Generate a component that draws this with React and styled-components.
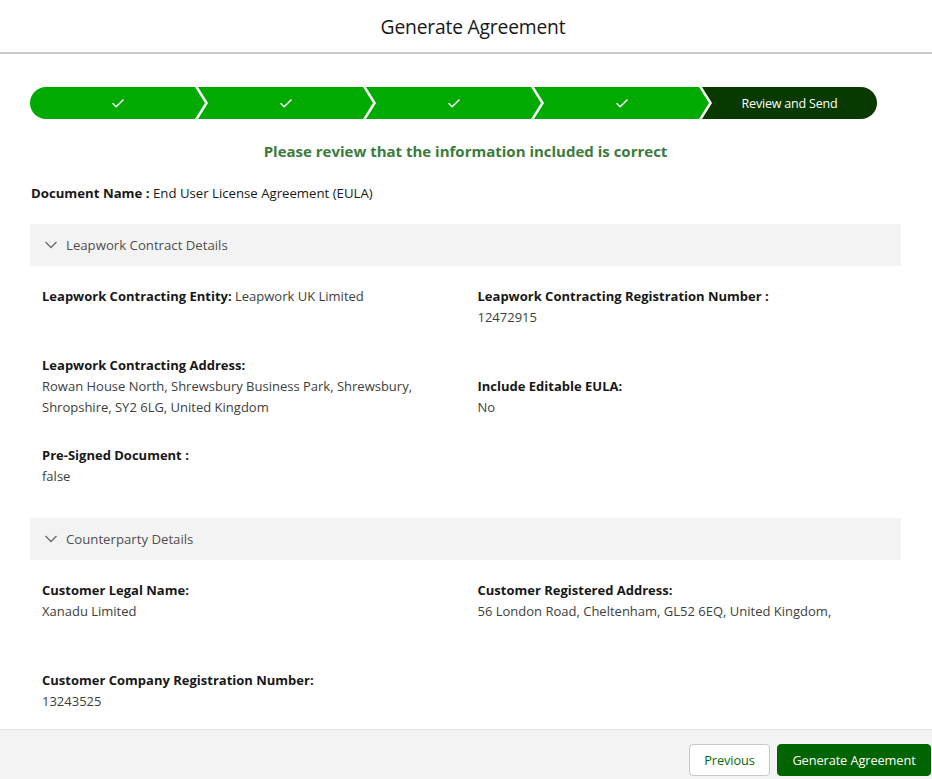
import React from "react";
import styled, { createGlobalStyle } from "styled-components";

const GlobalStyle = createGlobalStyle`
    html, body {
        margin: 0;
        padding: 0;
        background: #ffffff;
    }
    body {
        font-family: "Open Sans", "Noto Sans", Arial, sans-serif;
        color: #181818;
    }
    * {
        box-sizing: border-box;
    }
`;

const Page = styled.div`
    width: 932px;
    height: 779px;
    display: flex;
    flex-direction: column;
    overflow: hidden;
    background: #ffffff;
`;

const Header = styled.div`
    height: 54px;
    flex-shrink: 0;
    display: flex;
    align-items: center;
    justify-content: center;
    padding-left: 14px;
    border-bottom: 2px solid #c9c9c9;
    h1 {
        margin: 0;
        font-size: 19.3px;
        font-weight: 400;
        color: #181818;
        letter-spacing: -0.2px;
    }
`;

const Body = styled.div`
    flex: 1;
    overflow: hidden;
    padding: 33px 31px 0 30px;
`;

const Steps = styled.div`
    display: flex;
    height: 32px;
    width: 847px;
`;

const Step = styled.div`
    flex: 1;
    display: flex;
    align-items: center;
    justify-content: center;
    margin-left: ${(p) => (p.$first ? "0" : "-7px")};
    background: ${(p) => (p.$current ? "#083a00" : "#00aa00")};
    color: #ffffff;
    font-size: 12.5px;
    letter-spacing: -0.2px;
    border-radius: ${(p) => (p.$first ? "16px 0 0 16px" : p.$last ? "0 16px 16px 0" : "0")};
    clip-path: ${(p) =>
        p.$first
            ? "polygon(0 0, calc(100% - 10px) 0, 100% 50%, calc(100% - 10px) 100%, 0 100%)"
            : p.$last
            ? "polygon(0 0, 100% 0, 100% 100%, 0 100%, 10px 50%)"
            : "polygon(0 0, calc(100% - 10px) 0, 100% 50%, calc(100% - 10px) 100%, 0 100%, 10px 50%)"};
    svg {
        width: 14px;
        height: 14px;
    }
`;

const Notice = styled.div`
    margin: 22px 0 0;
    text-align: center;
    font-size: 15px;
    font-weight: 700;
    color: #3b7b3b;
`;

const DocLine = styled.div`
    margin-top: 22px;
    margin-left: 1px;
    font-size: 13.2px;
    line-height: 21px;
    color: #181818;
    b {
        font-weight: 700;
    }
`;

const SectionHead = styled.div`
    margin-top: ${(p) => (p.$first ? "20px" : "0")};
    height: 42px;
    background: #f3f3f3;
    display: flex;
    align-items: center;
    padding-left: 14px;
    gap: 8px;
    font-size: 13.2px;
    color: #514f4d;
    svg {
        width: 14px;
        height: 14px;
    }
`;

const FieldGrid = styled.div`
    display: grid;
    grid-template-columns: 1fr 1fr;
    row-gap: 27px;
    padding: 20px 0 ${(p) => p.$bottom || 31}px;
`;

const Field = styled.div`
    padding: 0 12px;
    font-size: 13px;
    line-height: 21px;
    color: #3e3e3c;
    align-self: ${(p) => (p.$bottom ? "end" : "start")};
    min-height: ${(p) => (p.$lines ? p.$lines * 21 : 0)}px;
    b {
        font-weight: 700;
        color: #181818;
    }
`;

const Footer = styled.div`
    height: 50px;
    flex-shrink: 0;
    display: flex;
    justify-content: flex-end;
    align-items: flex-start;
    gap: 7px;
    padding: 14px 1px 0 0;
    background: #f3f3f3;
    border-top: 1px solid #e5e5e5;
`;

const Button = styled.button`
    height: 32px;
    width: ${(p) => (p.$primary ? "154px" : "81px")};
    padding: 0;
    border-radius: 4px;
    font-family: inherit;
    font-size: 12.8px;
    letter-spacing: -0.1px;
    border: 1px solid ${(p) => (p.$primary ? "#006400" : "#c9c9c9")};
    background: ${(p) => (p.$primary ? "#006400" : "#ffffff")};
    color: ${(p) => (p.$primary ? "#ffffff" : "#0b6b0b")};
`;

const Check = () => (
    <svg viewBox="0 0 14 14" fill="none" stroke="#ffffff" strokeWidth="1.5">
        <path d="M1.5 7.2 L5.2 10.8 L12.5 3.5" />
    </svg>
);

const Chevron = () => (
    <svg viewBox="0 0 14 14" fill="none" stroke="#706e6b" strokeWidth="1.4">
        <path d="M1.5 4 L7 9.5 L12.5 4" />
    </svg>
);

const steps = ["", "", "", "", "Review and Send"];

const App = () => {
    return (
        <Page>
            <GlobalStyle />
            <Header>
                <h1>Generate Agreement</h1>
            </Header>
            <Body>
                <Steps>
                    {steps.map((s, i) => (
                        <Step
                            key={i}
                            $first={i === 0}
                            $last={i === steps.length - 1}
                            $current={i === steps.length - 1}
                        >
                            {s ? s : <Check />}
                        </Step>
                    ))}
                </Steps>
                <Notice>Please review that the information included is correct</Notice>
                <DocLine>
                    <b>Document Name :</b> End User License Agreement (EULA)
                </DocLine>

                <SectionHead $first>
                    <Chevron />
                    Leapwork Contract Details
                </SectionHead>
                <FieldGrid>
                    <Field>
                        <b>Leapwork Contracting Entity:</b> Leapwork UK Limited
                    </Field>
                    <Field>
                        <b>Leapwork Contracting Registration Number :</b>
                        <br />
                        12472915
                    </Field>
                    <Field>
                        <b>Leapwork Contracting Address:</b>
                        <br />
                        Rowan House North, Shrewsbury Business Park, Shrewsbury,
                        <br />
                        Shropshire, SY2 6LG, United Kingdom
                    </Field>
                    <Field $bottom>
                        <b>Include Editable EULA:</b>
                        <br />
                        No
                    </Field>
                    <Field>
                        <b>Pre-Signed Document :</b>
                        <br />
                        false
                    </Field>
                </FieldGrid>

                <SectionHead>
                    <Chevron />
                    Counterparty Details
                </SectionHead>
                <FieldGrid $bottom={20}>
                    <Field>
                        <b>Customer Legal Name:</b>
                        <br />
                        Xanadu Limited
                    </Field>
                    <Field $lines={3}>
                        <b>Customer Registered Address:</b>
                        <br />
                        56 London Road, Cheltenham, GL52 6EQ, United Kingdom,
                    </Field>
                    <Field>
                        <b>Customer Company Registration Number:</b>
                        <br />
                        13243525
                    </Field>
                </FieldGrid>
            </Body>
            <Footer>
                <Button>Previous</Button>
                <Button $primary>Generate Agreement</Button>
            </Footer>
        </Page>
    );
};

export default App;
